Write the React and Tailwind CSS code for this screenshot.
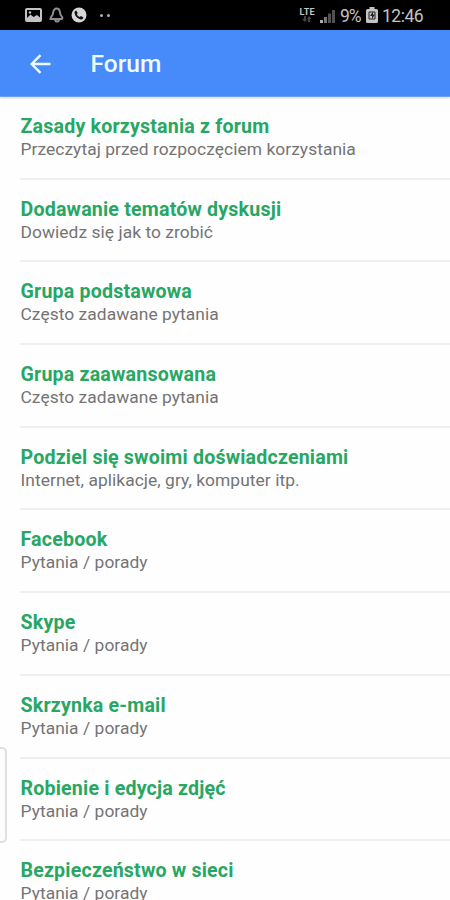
import React from 'react';

const topics = [
  { title: 'Zasady korzystania z forum', subtitle: 'Przeczytaj przed rozpoczęciem korzystania' },
  { title: 'Dodawanie tematów dyskusji', subtitle: 'Dowiedz się jak to zrobić' },
  { title: 'Grupa podstawowa', subtitle: 'Często zadawane pytania' },
  { title: 'Grupa zaawansowana', subtitle: 'Często zadawane pytania' },
  { title: 'Podziel się swoimi doświadczeniami', subtitle: 'Internet, aplikacje, gry, komputer itp.' },
  { title: 'Facebook', subtitle: 'Pytania / porady' },
  { title: 'Skype', subtitle: 'Pytania / porady' },
  { title: 'Skrzynka e-mail', subtitle: 'Pytania / porady' },
  { title: 'Robienie i edycja zdjęć', subtitle: 'Pytania / porady' },
  { title: 'Bezpieczeństwo w sieci', subtitle: 'Pytania / porady' },
];

const StatusBar = () => (
  <div className="h-[30px] shrink-0 bg-black text-[#c4c4c4] flex items-center justify-between pl-[25px] pr-[27px]">
    <div className="flex items-center">
      {/* Picture */}
      <svg width="17" height="14" viewBox="0 0 17 14" fill="none">
        <rect x="1" y="1" width="15" height="12" rx="1" stroke="currentColor" strokeWidth="2" />
        <path d="M2 10 5.5 6.5l3 2.5L12 7l3 2.5V12H2z" fill="currentColor" />
        <circle cx="5" cy="4.5" r="1.2" fill="currentColor" />
      </svg>
      {/* Notification bell */}
      <svg className="ml-[7px]" width="15" height="16" viewBox="0 0 15 16" fill="none" stroke="#8e8e8e" strokeWidth="2">
        <path d="M7.8 1.5C5 1.5 4.3 4 4 6.5 3.700 9 1.5 9.5 1.5 12h10.800c1.5 0 1.5-1.800.2-2.800C11 8 11.3 6.5 11 5 10.6 2.6 9.5 1.5 7.8 1.5z" />
        <path d="M6 12.5c.6 2.8 3.6 2.8 4.3 0" />
      </svg>
      {/* Call */}
      <svg className="ml-[7px]" width="16" height="16" viewBox="0 0 16 16">
        <circle cx="8" cy="8" r="7.5" fill="#d6d6d6" />
        <path d="M5.2 3.5 6.7 6 5.9 7.2c.6 1.3 1.5 2.2 2.8 2.8l1.3-.9 2.4 1.5c-.3 1.6-1.3 2.2-2.7 1.9C6.5 11.7 4.2 9.4 3.6 6.3 3.4 4.9 3.9 3.9 5.2 3.5z" fill="#111" />
      </svg>
      <div className="ml-[13px] flex gap-[4px]">
        <span className="size-[3px] rounded-full bg-[#b0b0b0]" />
        <span className="size-[3px] rounded-full bg-[#b0b0b0]" />
      </div>
    </div>

    <div className="flex items-center">
      <div className="flex flex-col items-center mr-[5px]">
        <span className="text-[9px] leading-[8px] font-bold tracking-[0.3px]">LTE</span>
        <svg width="10" height="6" viewBox="0 0 10 6" fill="#444">
          <path d="M2 0h2v3h1L3 6 0 3h2zM6 6h2V3h1.5L7 0 5 3h1z" />
        </svg>
      </div>
      {/* Signal strength */}
      <svg className="mt-[3px]" width="15" height="13" viewBox="0 0 15 13" fill="#505050">
        <rect x="0" y="10" width="3" height="3" fill="#aaa" />
        <rect x="4" y="7" width="3" height="6" fill="#777" />
        <rect x="8" y="3.5" width="3" height="9.5" />
        <rect x="12" y="0" width="3" height="13" />
      </svg>
      <span className="ml-[5px] mt-[2px] w-[22px] text-[17.5px] leading-[20px] tracking-[-1.2px] whitespace-nowrap">9%</span>
      {/* Battery */}
      <svg className="ml-[4px]" width="12" height="16" viewBox="0 0 12 16">
        <path d="M3.5 0h5v2h2q1.5 0 1.5 1.5v11q0 1.5-1.5 1.5h-9Q0 16 0 14.5v-11Q0 2 1.5 2h2z" fill="#c4c4c4" />
        <path d="M3 5h6v7H3z" fill="none" stroke="#222" />
        <path d="M7 4.5 4 9h2v3l3-4.5H7z" fill="#222" />
      </svg>
      <span className="ml-[4px] mt-[2px] w-[41px] text-[17.5px] leading-[20px] tracking-[-0.5px] whitespace-nowrap">12:46</span>
    </div>
  </div>
);

const AppBar = () => (
  <header className="h-[67px] shrink-0 bg-[#478afa] text-[#effaff] flex items-center pl-[30px] pt-[2px] border-b border-[#6f9ff0] shadow-[0_1px_2px_rgba(60,90,150,0.25)] z-10">
    <button type="button" aria-label="Wstecz">
      <svg width="21" height="20" viewBox="0 0 21 20" fill="none" stroke="currentColor" strokeWidth="2.4">
        <path d="M20.5 10H2M10.5 1.2 1.7 10l8.8 8.8" />
      </svg>
    </button>
    <h1 className="ml-[39.5px] text-[24.5px] leading-[28px] font-medium">Forum</h1>
  </header>
);

const TopicRow = ({ title, subtitle }) => (
  <li className="h-[82.7px] shrink-0 ml-[20px] pl-[0.5px] pt-[18px] border-b-2 border-[#eeefef]">
    <h2 className="text-[19.6px] leading-[23px] font-bold tracking-[0.19px] text-[#27a763] whitespace-nowrap">{title}</h2>
    <p className="text-[17.4px] leading-[22px] tracking-[0.05px] text-[#747474] whitespace-nowrap">{subtitle}</p>
  </li>
);

const App = () => {
  return (
    <div className="relative w-[450px] h-[900px] overflow-hidden bg-[#fefefe] flex flex-col font-['Roboto',sans-serif]">
      <StatusBar />
      <AppBar />
      <ul className="flex-1 min-h-0 overflow-hidden flex flex-col">
        {topics.map((topic) => (
          <TopicRow key={topic.title} title={topic.title} subtitle={topic.subtitle} />
        ))}
      </ul>

      {/* Edge panel handle */}
      <div className="absolute left-[-7px] top-[747px] w-[14px] h-[96px] rounded-[5px] border-2 border-[#e0e0e0] bg-[#fcfcfc]" />
    </div>
  );
};

export default App;
